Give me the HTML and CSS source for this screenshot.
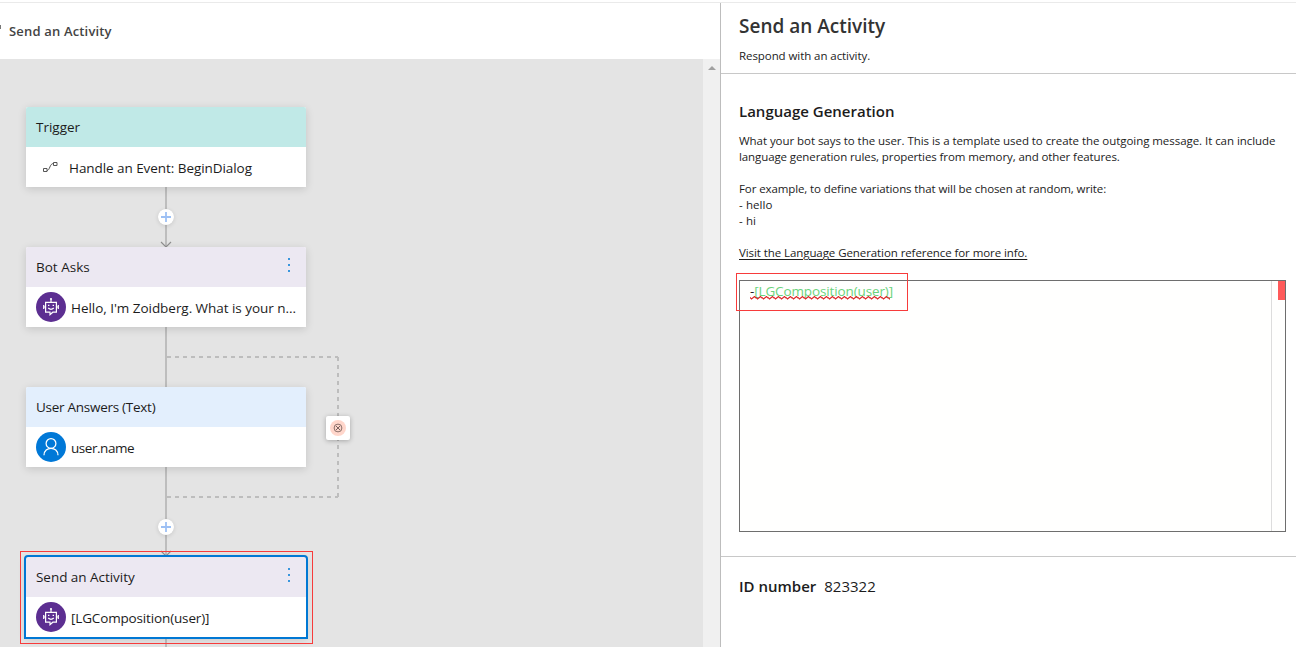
FILE: index.html
```html
<!DOCTYPE html>
<html lang="en">
<head>
<meta charset="utf-8">
<title>Send an Activity</title>
<link rel="stylesheet" href="styles.css">
</head>
<body>
<svg class="defs" width="0" height="0" aria-hidden="true">
  <symbol id="bot" viewBox="0 0 30 30">
    <circle cx="15" cy="15" r="15" fill="#5c2e91"/>
    <g fill="none" stroke="#fff" stroke-width="1.2">
      <path d="M9.6 10.4h10.8v9.800h-3.600l-2.800 2.500v-2.500H9.600z"/>
      <path d="M15 7.500v2.700M7.700 13v4M22.300 13v4M7.700 15h1.500M20.800 15h1.500"/>
      <path d="M12.200 16q2.800 2.600 5.600 0"/>
    </g>
    <circle cx="15" cy="7" r="1.1" fill="#fff"/>
    <path d="M12 12.700h1.400v1.300H12zM16.600 12.700H18v1.300h-1.400z" fill="#fff"/>
  </symbol>
  <symbol id="person" viewBox="0 0 30 30">
    <circle cx="15" cy="15" r="15" fill="#0078d7"/>
    <g fill="none" stroke="#fff" stroke-width="1.25">
      <circle cx="15" cy="11.4" r="4.9"/>
      <path d="M8 23.2c0-9.200 14-9.200 14 0"/>
    </g>
  </symbol>
  <symbol id="plus" viewBox="0 0 16 16">
    <circle cx="8" cy="8" r="8" fill="#fff"/>
    <path d="M8 3v10M3 8h10" stroke="#3c82ea" stroke-opacity=".5" stroke-width="1.8"/>
  </symbol>
  <symbol id="dots" viewBox="0 0 2 14">
    <path d="M0 0h2v2H0zM0 6h2v2H0zM0 12h2v2H0z" fill="#3996dd"/>
  </symbol>
</svg>

<div class="app">
  <main class="flow">
    <header class="crumbs"><i class="crumb-icon"></i><span>Send an Activity</span></header>
    <div class="viewport">
      <div class="canvas">
        <svg class="edges" width="702" height="588" fill="none">
          <path d="M166 128v60M166 268v60M166 408v88M166 579v10" stroke="#bdbdbd" stroke-width="2"/>
          <path d="M161 183l5 5 5-5M161 492l5 5 5-5" stroke="#8f8f8f" stroke-width="1.1"/>
          <path d="M167 298H338M167 438H338" stroke="#bdbdbd" stroke-width="2" stroke-dasharray="4"/>
          <path d="M338 298V439" stroke="#bdbdbd" stroke-width="2" stroke-dasharray="4"/>
        </svg>
        <svg class="plus plus-1"><use href="#plus"/></svg>
        <svg class="plus plus-2"><use href="#plus"/></svg>

        <section class="node node-trigger">
          <h3 class="node-head teal"><span>Trigger</span></h3>
          <div class="node-body event">
            <svg class="event-icon" viewBox="0 0 16 12" fill="none" stroke="#555"><path d="M1.500 7.500h3.500v3h-3.500zM11.500 1.500h3.500v3h-3.500zM5 9.500c3 0 2.500-7 6.500-7"/></svg>
            <span class="t-event">Handle an Event: BeginDialog</span>
          </div>
        </section>
        <section class="node node-asks">
          <h3 class="node-head lilac"><span class="t-asks">Bot Asks</span><svg class="dots"><use href="#dots"/></svg></h3>
          <div class="node-body"><svg class="avatar"><use href="#bot"/></svg><span class="t-hello">Hello, I'm Zoidberg. What is your n...</span></div>
        </section>
        <section class="node node-answers">
          <h3 class="node-head sky"><span class="t-answers">User Answers (Text)</span></h3>
          <div class="node-body"><svg class="avatar"><use href="#person"/></svg><span class="t-name">user.name</span></div>
        </section>
        <section class="node node-send">
          <h3 class="node-head lilac"><span class="t-send">Send an Activity</span><svg class="dots"><use href="#dots"/></svg></h3>
          <div class="node-body"><svg class="avatar"><use href="#bot"/></svg><span class="t-comp">[LGComposition(user)]</span></div>
        </section>
        <div class="invalid">
          <svg viewBox="0 0 16 16" width="16" height="16" fill="none"><circle cx="8" cy="8" r="8" fill="#ffd6cb"/><circle cx="8" cy="8" r="3.900" stroke="#6b5450" stroke-width=".8"/><path d="M6 6l4 4M10 6l-4 4" stroke="#6b5450" stroke-width=".9"/></svg>
        </div>
        <div class="mark mark-node"></div>
      </div>
      <div class="scrollbar"><i class="arrow-up"></i></div>
    </div>
  </main>

  <aside class="panel">
    <header class="panel-head">
      <h1>Send an Activity</h1>
      <p>Respond with an activity.</p>
    </header>
    <section class="language">
      <h2>Language Generation</h2>
      <div class="help">
        <p class="intro">What your bot says to the user. This is a template used to create the outgoing message. It can include</p>
        <p>language generation rules, properties from memory, and other features.</p>
        <br>
        <p>For example, to define variations that will be chosen at random, write:</p>
        <p class="sample">- hello</p>
        <p class="sample">- hi</p>
        <br>
        <p><a>Visit the Language Generation reference for more info.</a></p>
      </div>
      <div class="editor">
        <div class="code"><span class="lint"><span class="t-code">-<b>[LGComposition(user)]</b></span>
          <svg class="squiggle" width="140" height="4"><defs><pattern id="wave" width="6" height="4" patternUnits="userSpaceOnUse"><path d="M-1 .5L1.500 3 4.500 .5 7 3" fill="none" stroke="#dc2626" stroke-width="1.150"/></pattern></defs><rect width="140" height="4" fill="url(#wave)"/></svg></span></div>
        <div class="ruler"><i class="error-tick"></i></div>
        <div class="mark mark-code"></div>
      </div>
    </section>
    <footer class="meta"><strong>ID number</strong><span>823322</span></footer>
  </aside>
</div>
</body>
</html>
```
FILE: styles.css
```css
* { box-sizing: border-box; }
body {
  margin: 0;
  overflow: hidden;
  background: #fff;
  color: #1c1c1c;
  font-family: "Open Sans", "Noto Sans", sans-serif;
}
h1, h2, h3, p { margin: 0; font-weight: 400; }
span, a, p, strong { white-space: nowrap; }
.defs { position: absolute; }
.app {
  display: flex;
  height: 647px;
  padding-top: 2px;
  position: relative;
}
.app::before {
  content: "";
  position: absolute;
  inset: 2px 0 auto;
  height: 1px;
  background: #eaeaea;
}
.flow { width: 720px; display: flex; flex-direction: column; }
.crumbs {
  height: 57px;
  display: flex;
  align-items: center;
  font-size: 13px;
  font-weight: 600;
  letter-spacing: .17px;
  color: #444;
}
.crumb-icon {
  width: 1px;
  height: 4px;
  margin: -7px 8px 0 0;
  background: #777;
}
.viewport { flex: 1; display: flex; }
.canvas { flex: 1; position: relative; overflow: hidden; background: #e4e4e4; }
.scrollbar { width: 17px; background: #f0f0f0; padding: 7px 0 0 5px; }
.arrow-up {
  display: block;
  width: 0;
  border: 4px solid transparent;
  border-top: 0;
  border-bottom-color: #a0a0a0;
}
.edges, .plus, .node, .invalid, .mark { position: absolute; }
.edges { left: 0; top: 0; }
.plus { width: 16px; height: 16px; left: 158px; border-radius: 50%; box-shadow: 0 1px 4px rgba(0,0,0,.12); }
.plus-1 { top: 150px; }
.plus-2 { top: 460px; }
.node {
  left: 26px;
  width: 280px;
  height: 80px;
  border-radius: 2px 2px 0 0;
  background: #fff;
  box-shadow: 0 2px 8px rgba(0,0,0,.14);
  font-size: 13.5px;
}
.node-trigger { top: 48px; }
.node-asks { top: 188px; }
.node-answers { top: 328px; }
.node-send { top: 498px; outline: 2px solid #0078d4; }
.node-head {
  height: 40px;
  padding: 0 16px 0 10px;
  display: flex;
  align-items: center;
  justify-content: space-between;
  font-size: 13.5px;
  border-radius: 2px 2px 0 0;
}
.teal { background: #c0e9e7; }
.lilac { background: #ece8f2; }
.sky { background: #e3effd; }
.dots { width: 2px; height: 14px; margin-top: -4px; }
.node-body { height: 40px; display: flex; align-items: center; gap: 5px; padding-left: 10px; }
.node-body span { padding-top: 2px; }
.t-event { letter-spacing: -.06px; }
.t-hello, .t-send { letter-spacing: -.04px; }
.t-answers { letter-spacing: -.27px; }
.t-name { letter-spacing: -.45px; }
.t-comp { letter-spacing: -.15px; }
.event { padding-left: 16px; gap: 11px; }
.event-icon { width: 16px; height: 12px; }
.avatar { width: 30px; height: 30px; }
.invalid {
  left: 326px;
  top: 357px;
  width: 24px;
  height: 24px;
  padding: 4px;
  background: #fff;
  border-radius: 2px;
  box-shadow: 0 1px 5px rgba(0,0,0,.28);
}
.invalid svg { display: block; }
.mark { border: 1px solid #f73b3b; }
.mark-node { left: 20px; top: 492px; width: 293px; height: 93px; }

.panel { flex: 1; border-left: 1px solid #bdbdbd; margin-top: 1px; }
.panel-head { height: 71px; padding: 8px 0 0 18px; border-bottom: 1px solid #c8c8c8; }
.panel-head h1 { font-size: 19px; line-height: 30px; font-weight: 600; color: #333; }
.panel-head p { font-size: 11.5px; line-height: 16px; margin-top: 7px; letter-spacing: -.07px; }
.language { height: 483px; padding: 25px 10px 0 18px; border-bottom: 1px solid #c8c8c8; }
.language h2 { font-size: 15px; line-height: 24px; font-weight: 600; }
.help { margin-top: 10px; font-size: 11.5px; line-height: 16px; letter-spacing: -.1px; }
.help .intro { letter-spacing: -.05px; }
.help .sample { letter-spacing: .1px; }
.help a { text-decoration: underline; text-underline-offset: 1.5px; letter-spacing: -.08px; }
.editor {
  position: relative;
  display: flex;
  height: 252px;
  margin-top: 19px;
  border: 1px solid #6e6e6e;
  background: #fffffe;
}
.code { flex: 1; padding: 0 0 0 10px; font-size: 13.5px; line-height: 20px; }
.code b { font-weight: 400; color: #6bd37c; }
.t-code { letter-spacing: -.13px; }
.lint { position: relative; display: inline-block; }
.squiggle { position: absolute; left: 0; top: 15px; }
.ruler { width: 14px; border-left: 1px solid #ddd; padding-left: 6px; }
.error-tick { display: block; width: 7px; height: 19px; background: #ff5a5a; }
.mark-code { left: -4px; top: -8px; width: 172px; height: 38px; }
.meta { display: flex; gap: 8px; align-items: center; padding: 17px 0 0 18px; font-size: 15px; line-height: 24px; }
.meta strong { font-weight: 600; }
```
